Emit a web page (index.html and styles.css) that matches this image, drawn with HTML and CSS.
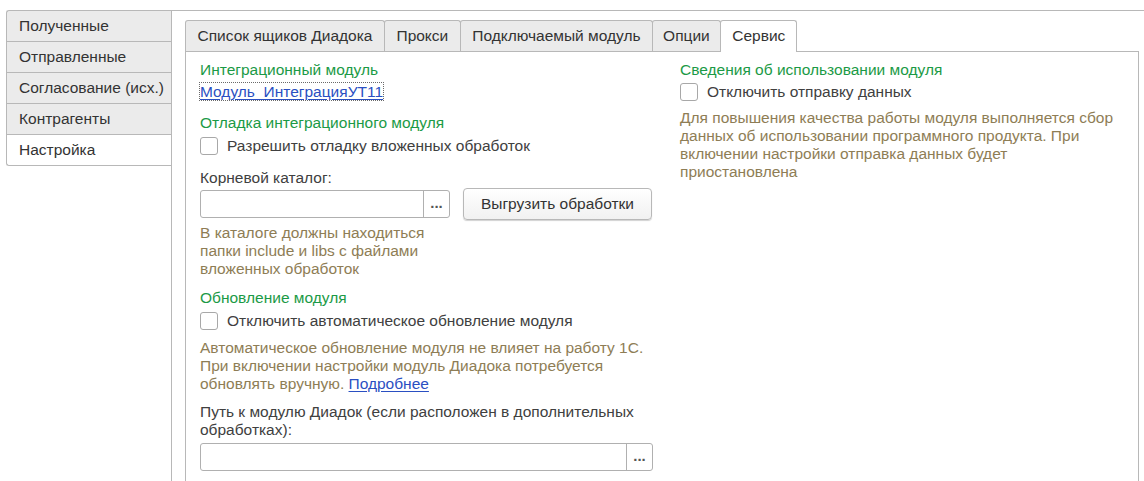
FILE: index.html
```html
<!DOCTYPE html>
<html lang="ru">
<head>
<meta charset="utf-8">
<title>Настройка</title>
<link rel="stylesheet" href="styles.css">
</head>
<body>
<div class="app">
  <nav class="sidenav">
    <div class="stab first">Полученные</div>
    <div class="stab">Отправленные</div>
    <div class="stab">Согласование (исх.)</div>
    <div class="stab">Контрагенты</div>
    <div class="stab active">Настройка</div>
  </nav>
  <main class="outer">
    <div class="tabs">
      <div class="tab">Список ящиков Диадока</div>
      <div class="tab">Прокси</div>
      <div class="tab">Подключаемый модуль</div>
      <div class="tab opt">Опции</div>
      <div class="tab active">Сервис</div>
    </div>
    <div class="page">
      <section class="col left">
        <div class="title">Интеграционный модуль</div>
        <div class="linkrow"><a class="link focus" href="#">Модуль_ИнтеграцияУТ11</a></div>

        <div class="title t2">Отладка интеграционного модуля</div>
        <label class="check"><span class="box"></span><span>Разрешить отладку вложенных обработок</span></label>

        <div class="label l1">Корневой каталог:</div>
        <div class="inrow">
          <div class="input short"><span class="field"></span><span class="dots">...</span></div>
          <button class="btn">Выгрузить обработки</button>
        </div>
        <div class="hint h1">В каталоге должны находиться<br>папки include и libs с файлами<br>вложенных обработок</div>

        <div class="title t3">Обновление модуля</div>
        <label class="check"><span class="box"></span><span>Отключить автоматическое обновление модуля</span></label>
        <div class="hint h2">Автоматическое обновление модуля не влияет на работу 1С.<br>При включении настройки модуль Диадока потребуется<br>обновлять вручную. <a class="link" href="#">Подробнее</a></div>

        <div class="label l2">Путь к модулю Диадок (если расположен в дополнительных<br>обработках):</div>
        <div class="input wide"><span class="field"></span><span class="dots">...</span></div>
      </section>
      <section class="col right">
        <div class="title">Сведения об использовании модуля</div>
        <label class="check c2"><span class="box"></span><span>Отключить отправку данных</span></label>
        <div class="hint h3">Для повышения качества работы модуля выполняется сбор<br>данных об использовании программного продукта. При<br>включении настройки отправка данных будет<br>приостановлена</div>
      </section>
    </div>
  </main>
</div>
</body>
</html>
```

FILE: styles.css
```css
* { box-sizing: border-box; }
html, body { margin: 0; padding: 0; background: #fff; }
body {
  font-family: "Liberation Sans", Arial, sans-serif;
  font-size: 15.5px;
  line-height: 18px;
  color: #404040;
  height: 481px;
  overflow: hidden;
}
.app {
  display: flex;
  padding-top: 10px;
  height: 100%;
}
.sidenav {
  width: 165px;
  margin-left: 6px;
  flex: none;
}
.stab {
  height: 31px;
  padding: 6px 0 0 12px;
  background: #ebebeb;
  border: 1px solid #b8b8b8;
  border-right: none;
  border-bottom: none;
  color: #333;
  white-space: nowrap;
}
.stab.first { border-top-left-radius: 3px; }
.stab.active {
  background: #fff;
  height: 32px;
  border-bottom: 1px solid #b8b8b8;
  border-bottom-left-radius: 3px;
}
.outer {
  flex: 1;
  border-top: 1px solid #b8b8b8;
  border-left: 1px solid #b8b8b8;
  padding: 9px 5px 0 13px;
  display: flex;
  flex-direction: column;
}
.tabs {
  display: flex;
  height: 31px;
  position: relative;
  z-index: 1;
}
.tab {
  height: 31px;
  padding: 6px 11.5px 0 11.5px;
  background: #ebebeb;
  border: 1px solid #b8b8b8;
  border-bottom: none;
  border-radius: 3px 3px 0 0;
  margin-right: -1px;
  color: #333;
  white-space: nowrap;
}
.tab.opt { padding: 6px 10px 0 10px; }
.tab.active {
  background: #fff;
  height: 32px;
  padding-right: 11px;
}
.page {
  flex: 1;
  border-top: 1px solid #b8b8b8;
  border-left: 1px solid #b8b8b8;
  border-right: 1px solid #b8b8b8;
  display: flex;
  padding: 9px 0 0 14px;
}
.col.left { width: 452px; flex: none; }
.col.right { margin-left: 28px; flex: 1; white-space: nowrap; }
.title { color: #1b9a46; height: 18px; white-space: nowrap; }
.t2 { margin-top: 13px; }
.t3 { margin-top: 11px; }
.linkrow { margin-top: 4px; height: 18px; }
.link { color: #2a4fc2; text-decoration: underline; text-underline-offset: 2px; }
.link.focus { outline: 1px dotted #6a6a6a; outline-offset: 0; }
.check {
  display: flex;
  align-items: center;
  gap: 9px;
  height: 18px;
  margin-top: 5px;
  white-space: nowrap;
}
.check.c2 { margin-top: 4px; }
.box {
  width: 18px;
  height: 18px;
  border: 1px solid #a8a8a8;
  border-radius: 3px;
  background: #fff;
  flex: none;
}
.label { white-space: nowrap; }
.label.l1 { margin-top: 14px; }
.label.l2 { margin-top: 10px; }
.inrow {
  display: flex;
  align-items: center;
  gap: 13px;
  margin-top: 0;
  height: 34px;
}
.input {
  display: flex;
  height: 28px;
  border: 1px solid #b0b0b0;
  border-radius: 3px;
  background: #fff;
}
.input.short { width: 250px; }
.input.wide { width: 453px; margin-top: 4px; }
.field { flex: 1; }
.dots {
  width: 26px;
  border-left: 1px solid #b0b0b0;
  text-align: center;
  line-height: 24px;
  font-size: 15px;
  font-weight: bold;
  color: #555;
}
.btn {
  font: inherit;
  color: #333;
  width: 189px;
  height: 32px;
  border: 1px solid #b8b8b8;
  border-radius: 4px;
  background: linear-gradient(#ffffff, #f1f1f1);
  box-shadow: 0 1px 1px rgba(0,0,0,0.18);
  padding: 0;
}
.hint { color: #8e7d55; white-space: nowrap; }
.h1 { margin-top: 3px; }
.h2 { margin-top: 9px; }
.h3 { margin-top: 8px; }
```
